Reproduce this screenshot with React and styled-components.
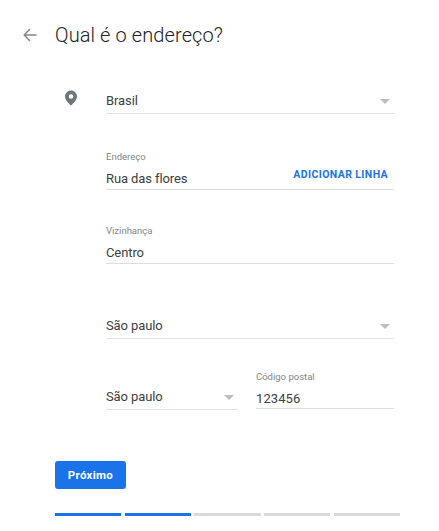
import React from "react";
import styled, { createGlobalStyle } from "styled-components";

const Global = createGlobalStyle`
  html, body { margin: 0; padding: 0; background: #fff; }
  body { font-family: Roboto, "Liberation Sans", sans-serif; }
`;

const Page = styled.div`
  width: 439px;
  height: 531px;
  box-sizing: border-box;
  padding: 23px 45px 0 23px;
  overflow: hidden;
`;

const Header = styled.div`
  display: flex;
  align-items: center;
  height: 24px;
  gap: 18px;
`;

const BackIcon = styled.svg`
  width: 14px;
  height: 14px;
  fill: none;
  stroke: #80868b;
  stroke-width: 1.4;
  flex: none;
`;

const Title = styled.h1`
  margin: 0;
  font-size: 20px;
  font-weight: 300;
  line-height: 24px;
  color: #202124;
  letter-spacing: 0.1px;
`;

const Form = styled.div`
  display: flex;
  margin: 42px 0 0 33px;
`;

const PinCell = styled.div`
  width: 50px;
  flex: none;
`;

const Pin = styled.svg`
  display: block;
  width: 18px;
  height: 18px;
  margin: 0 0 0 6px;
  fill: #70757a;
`;

const Fields = styled.div`
  flex: 1;
  display: flex;
  flex-direction: column;
`;

const Field = styled.div`
  height: ${(p) => p.$h}px;
  margin-top: ${(p) => p.$mt || 0}px;
  margin-bottom: ${(p) => p.$mb || 0}px;
  width: ${(p) => (p.$w ? `${p.$w}px` : "auto")};
  box-sizing: border-box;
  border-bottom: 1px solid ${(p) => p.$line || "#e2e3e5"};
  display: flex;
  flex-direction: column;
  justify-content: flex-end;
`;

const Label = styled.div`
  font-size: 9.5px;
  line-height: 12px;
  color: #80868b;
  margin-bottom: ${(p) => p.$gap || 6}px;
`;

const ValueRow = styled.div`
  display: flex;
  align-items: center;
  justify-content: space-between;
  height: ${(p) => p.$h || 20}px;
`;

const Value = styled.span`
  font-size: 13px;
  line-height: 18px;
  color: #3c4043;
  letter-spacing: ${(p) => (p.$digits ? 0.1 : -0.1)}px;
`;

const Caret = styled.span`
  width: 0;
  height: 0;
  border-left: 5px solid transparent;
  border-right: 5px solid transparent;
  border-top: 5px solid #bdbdbd;
  margin-right: 4px;
  margin-top: 1px;
`;

const Action = styled.span`
  font-size: 10.5px;
  font-weight: 700;
  letter-spacing: 0.4px;
  color: #1a73e8;
  margin: 0 6px 10px 0;
`;

const Pair = styled.div`
  display: flex;
  align-items: flex-end;
  gap: 18px;
  margin-top: 32px;
`;

const NextButton = styled.button`
  display: block;
  width: 71px;
  height: 28px;
  margin: 51px 0 0 32px;
  padding: 0;
  border: 0;
  border-radius: 3px;
  background: #1a73e8;
  color: #fff;
  font: 700 11.5px Roboto, sans-serif;
  letter-spacing: 0.3px;
`;

const Progress = styled.div`
  display: grid;
  grid-template-columns: repeat(5, 1fr);
  column-gap: 3.25px;
  width: 345px;
  margin: 24px 0 0 32px;
`;

const Step = styled.div`
  height: 3px;
  background: ${(p) => (p.$on ? "#1a73e8" : "#d9d9dc")};
`;

export default function App() {
  return (
    <Page>
      <Global />
      <Header>
        <BackIcon viewBox="0 0 14 14">
          <path d="M13.5 7H1.2M7 1 1.2 7 7 13" />
        </BackIcon>
        <Title>Qual é o endereço?</Title>
      </Header>
      <Form>
        <PinCell>
          <Pin viewBox="0 0 24 24">
            <path d="M12 2C7.600 2 4 5.600 4 10c0 5.500 8 12 8 12s8-6.500 8-12c0-4.400-3.600-8-8-8zm0 11a3 3 0 1 1 0-6 3 3 0 0 1 0 6z" />
          </Pin>
        </PinCell>
        <Fields>
          <Field $h={25}>
            <ValueRow $h={24}>
              <Value>Brasil</Value>
              <Caret />
            </ValueRow>
          </Field>
          <Field $h={43} $mt={33} $line="#dadce0">
            <Label>Endereço</Label>
            <ValueRow>
              <Value>Rua das flores</Value>
              <Action>ADICIONAR LINHA</Action>
            </ValueRow>
          </Field>
          <Field $h={43} $mt={31} $line="#dadce0">
            <Label>Vizinhança</Label>
            <ValueRow>
              <Value>Centro</Value>
            </ValueRow>
          </Field>
          <Field $h={25} $mt={50}>
            <ValueRow $h={24}>
              <Value>São paulo</Value>
              <Caret />
            </ValueRow>
          </Field>
          <Pair>
            <Field $h={25} $w={132}>
              <ValueRow $h={24}>
                <Value>São paulo</Value>
                <Caret />
              </ValueRow>
            </Field>
            <Field $h={38} $w={138} $mb={1} $line="#dadce0">
              <Label $gap={7}>Código postal</Label>
              <ValueRow $h={22}>
                <Value $digits>123456</Value>
              </ValueRow>
            </Field>
          </Pair>
        </Fields>
      </Form>
      <NextButton>Próximo</NextButton>
      <Progress>
        <Step $on />
        <Step $on />
        <Step />
        <Step />
        <Step />
      </Progress>
    </Page>
  );
}
